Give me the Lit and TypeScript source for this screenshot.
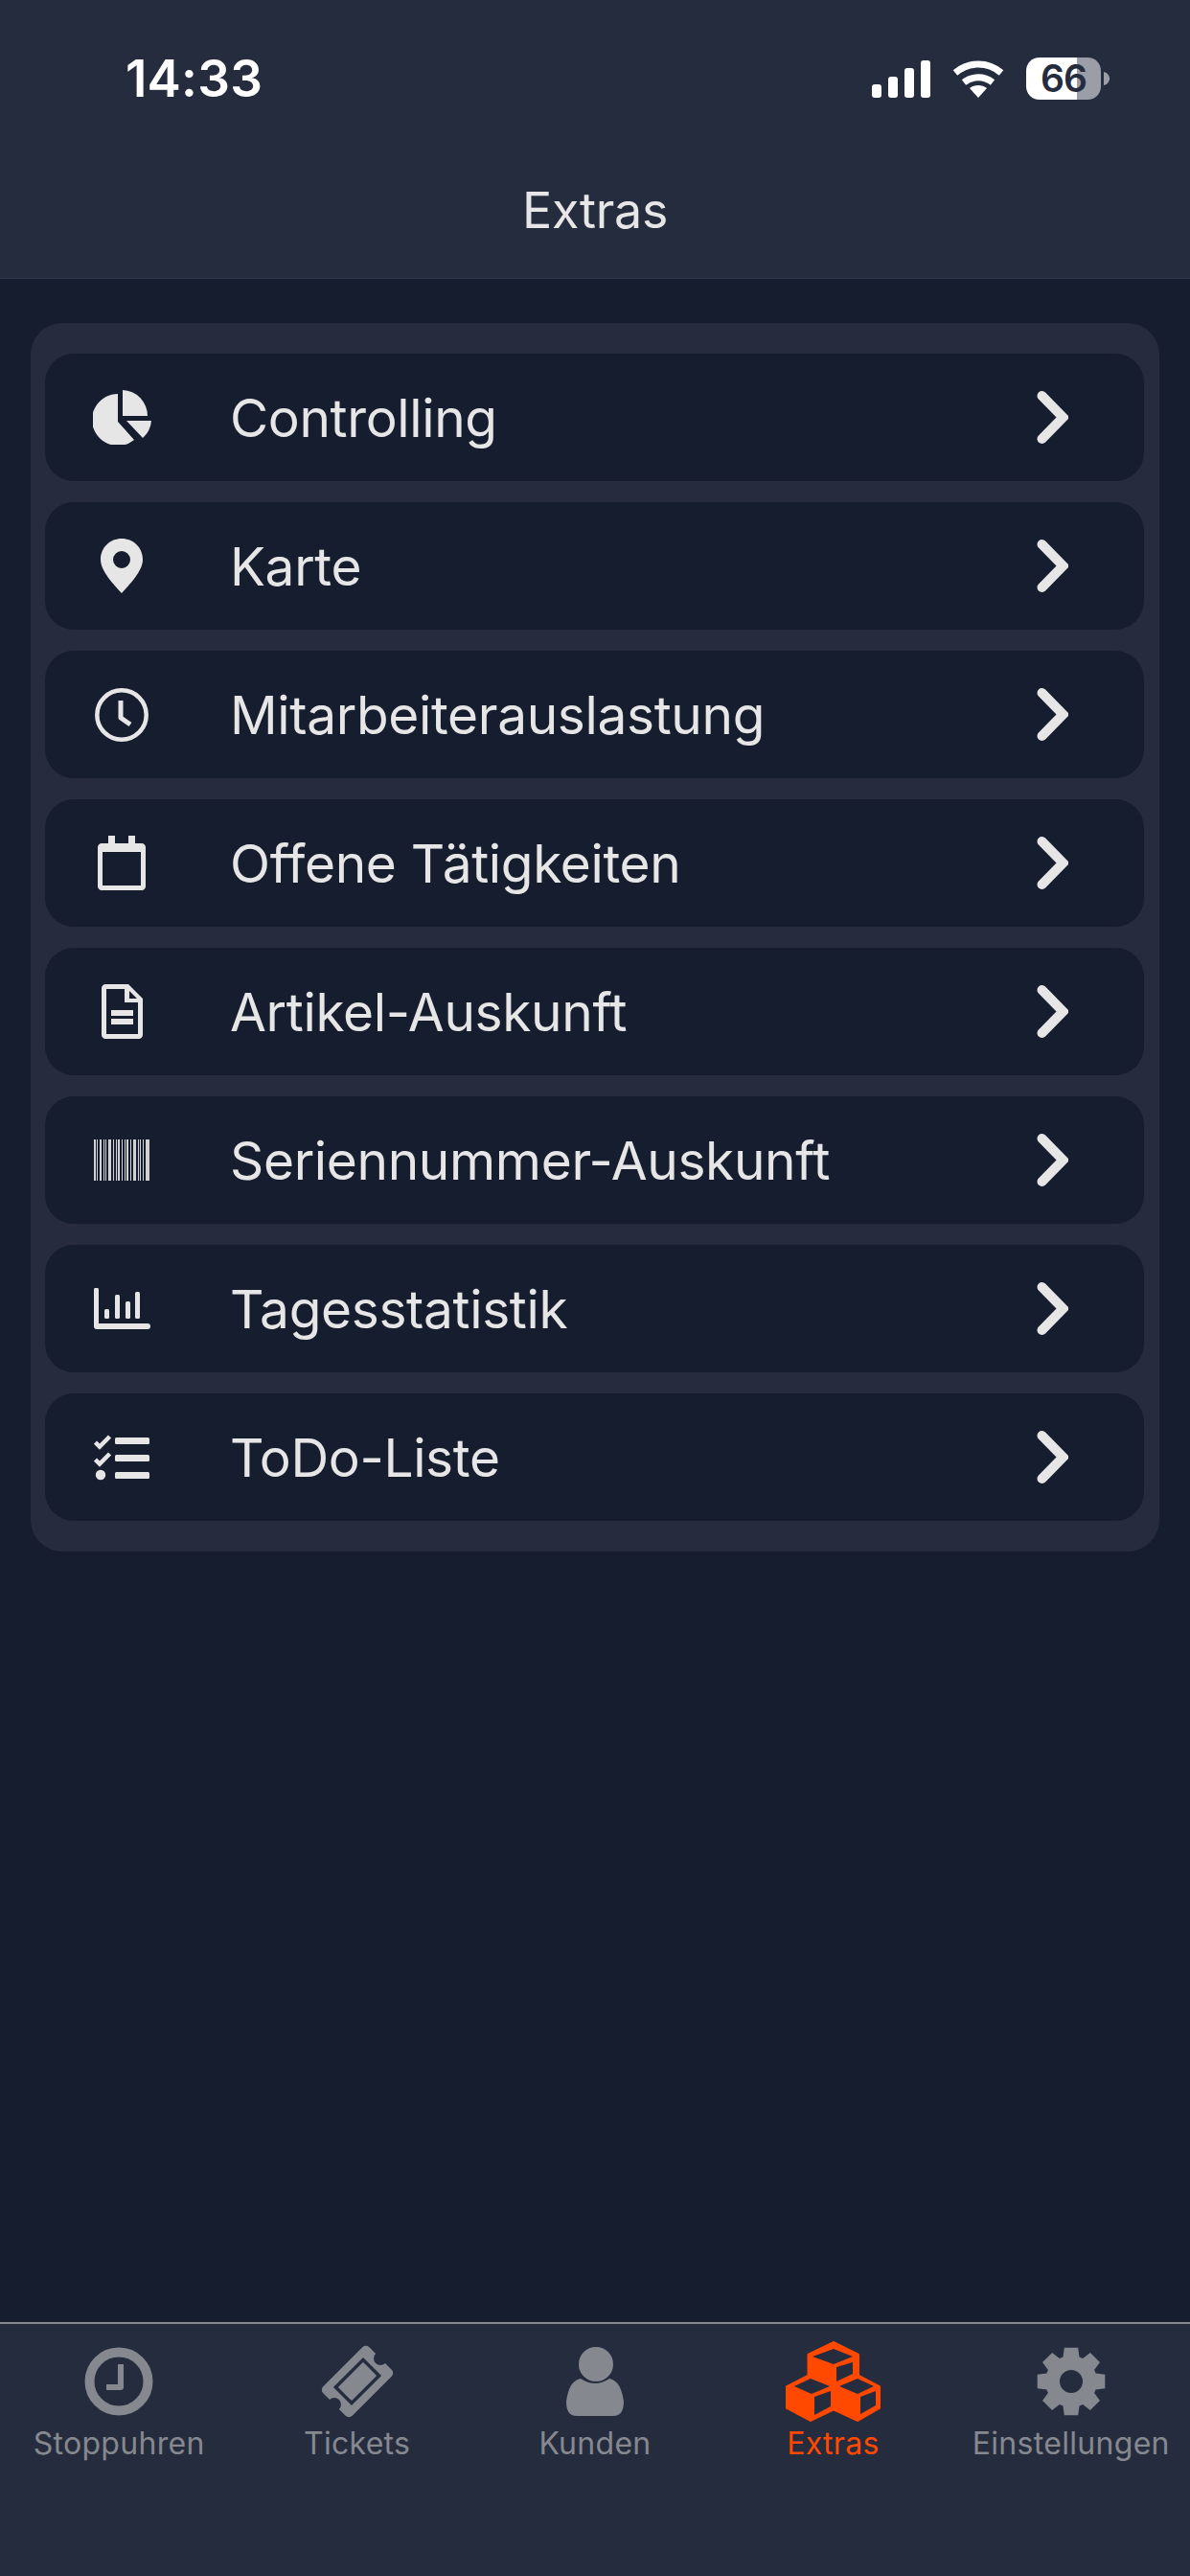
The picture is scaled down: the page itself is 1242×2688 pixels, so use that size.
import { LitElement, html, css, svg } from 'lit';
import { customElement } from 'lit/decorators.js';

const barcodeBars = [
  [0, 2], [3, 1], [6, 2], [10, 1], [12, 1], [15, 3], [20, 1], [23, 1], [25, 2], [29, 1],
  [32, 1], [34, 2], [38, 1], [41, 3], [46, 1], [48, 1], [51, 1], [54, 4],
];

// 8 tooth gear outline around 0,0, hole added as a second subpath
function gearPath(outer: number, root: number, hole: number) {
  const pts: string[] = [];
  for (let i = 0; i < 8; i++) {
    const a = (i * Math.PI) / 4 - Math.PI / 2;
    const at = (r: number, off: number) =>
      `${(r * Math.cos(a + off)).toFixed(1)},${(r * Math.sin(a + off)).toFixed(1)}`;
    pts.push(at(root, -0.32), at(outer, -0.2), at(outer, 0.2), at(root, 0.32));
  }
  return `M${pts.join('L')}ZM${hole},0A${hole} ${hole} 0 1 0 ${-hole},0A${hole} ${hole} 0 1 0 ${hole},0Z`;
}

const icons = {
  pie: svg`<path d="M31 0A27 27 0 0 1 57 27H31Z"/><path d="M26 4A27 27 0 1 0 43 52L26 33Z"/><path d="M35 32H61A27 27 0 0 1 52 50Z"/>`,
  pin: svg`<path fill-rule="evenodd" d="M22 0C10 0 0 9 0 22c0 12 14 26 22 35 8-9 22-23 22-35C44 9 34 0 22 0Zm0 13a9 9 0 1 1 0 18 9 9 0 0 1 0-18Z"/>`,
  clock: svg`<circle cx="28" cy="28" r="25.7" fill="none" stroke="currentColor" stroke-width="4.5"/><path d="M27 13v18l10 7" fill="none" stroke="currentColor" stroke-width="5" stroke-linejoin="round"/>`,
  calendar: svg`<path fill-rule="evenodd" d="M11 0h7v8h14V0h7v8h7c2 0 4 2 4 4v41c0 2-2 4-4 4H4c-2 0-4-2-4-4V12c0-2 2-4 4-4h7V0ZM5 17v35h40V17H5Z"/>`,
  doc: svg`<path fill-rule="evenodd" d="M4 0h24l15 15v38c0 2-2 4-4 4H4c-2 0-4-2-4-4V4c0-2 2-4 4-4Zm1 5v47h33V19H24V5H5Zm24 2v8h8l-8-8ZM10 27h23v6H10v-6Zm0 9h23v6H10v-6Z"/>`,
  barcode: svg`${barcodeBars.map(([x, w]) => svg`<rect x=${x} y="0" width=${w} height="43" opacity="0.9"/>`)}`,
  stats: svg`<path d="M0 2a2 2 0 0 1 5 0v35h51a3 3 0 0 1 0 6H3a3 3 0 0 1-3-3V2Z"/><rect x="11" y="22" width="5" height="10" rx="1.5"/><rect x="22" y="7" width="5" height="25" rx="1.5"/><rect x="33" y="14" width="5" height="18" rx="1.5"/><rect x="43" y="4" width="5" height="28" rx="1.5"/>`,
  todo: svg`<rect x="22" y="3" width="36" height="7" rx="1.5"/><rect x="22" y="21" width="36" height="7" rx="1.5"/><rect x="22" y="39" width="36" height="7" rx="1.5"/><path d="M1.5 8l4.5 4.5L16.5 2M1.5 26l4.5 4.5L16.5 20" fill="none" stroke="currentColor" stroke-width="4.5"/><circle cx="7" cy="42" r="5.2"/>`,
};

const rows = [
  { label: 'Controlling', icon: icons.pie, box: '0 0 61 57', w: 61, h: 57 },
  { label: 'Karte', icon: icons.pin, box: '0 0 44 57', w: 44, h: 57 },
  { label: 'Mitarbeiterauslastung', icon: icons.clock, box: '0 0 56 56', w: 56, h: 56 },
  { label: 'Offene Tätigkeiten', icon: icons.calendar, box: '0 0 50 57', w: 50, h: 57 },
  { label: 'Artikel-Auskunft', icon: icons.doc, box: '0 0 43 57', w: 43, h: 57 },
  { label: 'Seriennummer-Auskunft', icon: icons.barcode, box: '0 0 58 43', w: 58, h: 43 },
  { label: 'Tagesstatistik', icon: icons.stats, box: '0 0 59 43', w: 59, h: 43 },
  { label: 'ToDo-Liste', icon: icons.todo, box: '0 0 58 48', w: 58, h: 48 },
];

const tabs = [
  {
    label: 'Stoppuhren',
    w: 72,
    h: 72,
    icon: svg`<circle cx="36" cy="36" r="30.5" fill="none" stroke="currentColor" stroke-width="10"/><path d="M38 18v24H23" fill="none" stroke="currentColor" stroke-width="6" stroke-linejoin="round"/>`,
  },
  {
    label: 'Tickets',
    w: 80,
    h: 80,
    icon: svg`<g transform="translate(40 40) rotate(-45)"><path fill-rule="evenodd" d="M-29-21.5H29a5 5 0 0 1 5 5V-7A7 7 0 0 0 34 7V16.5a5 5 0 0 1-5 5H-29a5 5 0 0 1-5-5V7A7 7 0 0 0-34-7V-16.5a5 5 0 0 1 5-5ZM-22-13.5V13.5H22V-13.5Z"/><rect x="-18.5" y="-10" width="37" height="20" rx="1"/></g>`,
  },
  {
    label: 'Kunden',
    w: 60,
    h: 72,
    icon: svg`<circle cx="31" cy="18" r="18"/><path d="M15 33Q30 43 45 33C54 35 58 43 60 57C60 66 57 72 49 72H11C3 72 0 66 0 57C2 43 6 35 15 33Z"/>`,
  },
  {
    label: 'Extras',
    w: 99,
    h: 84,
    // faces are cut out by painting them in the bar colour, the stroke rounds the outline only
    icon: svg`<path stroke="currentColor" stroke-width="3" stroke-linejoin="round" d="M50 1.5L75.5 14V36L97.5 47.5V69.5L75 82.5L50 71L26 82.5L1.5 69.5V47.5L24 36V14Z"/><path fill="#252c3e" d="M28 16L50 8L70 16L50 24ZM53 27L70 22V34L53 42ZM9 47L26 39L46 47L27 55ZM30 58L47 52V68L30 77ZM56 47L75 39L92 47L75 55ZM78 58L94 52V67L78 76Z"/>`,
  },
  {
    label: 'Einstellungen',
    w: 72,
    h: 72,
    icon: svg`<g transform="translate(36 36)"><path fill-rule="evenodd" d=${gearPath(36, 27, 12)}/></g>`,
  },
];

@customElement('app-root')
export class AppRoot extends LitElement {
  static styles = css`
    :host {
      display: flex;
      flex-direction: column;
      width: 1242px;
      height: 2688px;
      background: #161d2e;
      font-family: Inter, 'Liberation Sans', sans-serif;
      color: #e6e6e6;
      overflow: hidden;
    }

    .top {
      box-sizing: border-box;
      height: 291px;
      background: #252c3e;
      border-bottom: 1px solid #30364a;
      padding-top: 55px;
    }

    .status {
      display: flex;
      align-items: center;
      justify-content: space-between;
      height: 54px;
      padding: 0 84px 0 131px;
      color: #fff;
    }

    .time {
      font-size: 53px;
      font-weight: 600;
      letter-spacing: 0.2px;
    }

    .status-icons {
      display: flex;
      align-items: center;
      gap: 23px;
    }

    .battery {
      position: relative;
      width: 87px;
      height: 44px;
    }

    .battery svg {
      display: block;
    }

    .battery span {
      position: absolute;
      left: 0;
      width: 78px;
      top: 0;
      line-height: 44px;
      text-align: center;
      color: #252c3e;
      font-size: 39px;
      font-weight: 600;
      letter-spacing: -1px;
    }

    .title {
      margin-top: 81px;
      text-align: center;
      font-size: 52px;
      line-height: 60px;
      letter-spacing: -0.3px;
    }

    .main {
      flex: 1;
      padding: 46px 32px 0;
    }

    .card {
      display: flex;
      flex-direction: column;
      gap: 22px;
      background: #262c3e;
      border-radius: 33px;
      padding: 32px 16px 32px 15px;
    }

    .row {
      display: flex;
      align-items: center;
      height: 133px;
      background: #161d2e;
      border-radius: 30px;
    }

    .row-icon {
      display: flex;
      align-items: center;
      justify-content: center;
      flex: none;
      width: 160px;
      margin-right: 33px;
    }

    .row-icon svg {
      fill: currentColor;
      display: block;
    }

    .row-label {
      flex: 1;
      padding-top: 2px;
      font-size: 55px;
      line-height: 1;
      letter-spacing: -0.35px;
    }

    .chevron {
      flex: none;
      margin-right: 79px;
      display: block;
    }

    .tabbar {
      box-sizing: border-box;
      height: 265px;
      background: #252c3e;
      border-top: 2px solid #85888f;
      display: grid;
      grid-template-columns: repeat(5, 1fr);
      padding-top: 18px;
    }

    .tab {
      display: flex;
      flex-direction: column;
      align-items: center;
      color: #85888f;
    }

    .tab.active {
      color: #ff4800;
    }

    .tab-icon {
      height: 84px;
      display: flex;
      align-items: center;
      justify-content: center;
    }

    .tab-icon svg {
      display: block;
      fill: currentColor;
    }

    .tab-label {
      margin-top: 3px;
      font-size: 32px;
      line-height: 40px;
      letter-spacing: 0.3px;
      white-space: nowrap;
    }
  `;

  render() {
    return html`
      <div class="top">
        <div class="status">
          <span class="time">14:33</span>
          <div class="status-icons">
            <svg width="61" height="39" viewBox="0 0 61 39" fill="#fff">
              <rect x="0" y="25" width="10" height="14" rx="3" />
              <rect x="17" y="17" width="10" height="22" rx="3" />
              <rect x="34" y="8" width="10" height="31" rx="3" />
              <rect x="51" y="0" width="10" height="39" rx="3" />
            </svg>
            <svg width="54" height="39" viewBox="0 0 54 39" fill="none" stroke="#fff" stroke-width="7">
              <path d="M3 13c14-12 34-12 48 0" />
              <path d="M12 23c9-7 21-7 30 0" />
              <path d="M27 39l-9-10c5-4 13-4 18 0Z" fill="#fff" stroke="none" />
            </svg>
            <div class="battery">
              <svg width="87" height="44" viewBox="0 0 87 44">
                <path d="M14 0h39v44H14C6 44 0 38 0 30V14C0 6 6 0 14 0Z" fill="#fff" />
                <path d="M53 0h11c8 0 14 6 14 14v16c0 8-6 14-14 14H53Z" fill="#9b9ea6" />
                <path d="M81 15c4 1 6 4 6 7s-2 6-6 7Z" fill="#9b9ea6" />
              </svg>
              <span>66</span>
            </div>
          </div>
        </div>
        <div class="title">Extras</div>
      </div>
      <div class="main">
        <div class="card">
          ${rows.map(
            (row) => html`
              <div class="row">
                <div class="row-icon">
                  <svg width=${row.w} height=${row.h} viewBox=${row.box}>${row.icon}</svg>
                </div>
                <div class="row-label">${row.label}</div>
                <svg class="chevron" width="33" height="55" viewBox="0 0 33 55" fill="none" stroke="#e6e6e6" stroke-width="10" stroke-linecap="round">
                  <path d="M5.5 5L27.5 27.5L5.5 50" />
                </svg>
              </div>
            `
          )}
        </div>
      </div>
      <div class="tabbar">
        ${tabs.map(
          (tab) => html`
            <div class="tab ${tab.label === 'Extras' ? 'active' : ''}">
              <div class="tab-icon">
                <svg width=${tab.w} height=${tab.h} viewBox="0 0 ${tab.w} ${tab.h}">${tab.icon}</svg>
              </div>
              <div class="tab-label">${tab.label}</div>
            </div>
          `
        )}
      </div>
    `;
  }
}
